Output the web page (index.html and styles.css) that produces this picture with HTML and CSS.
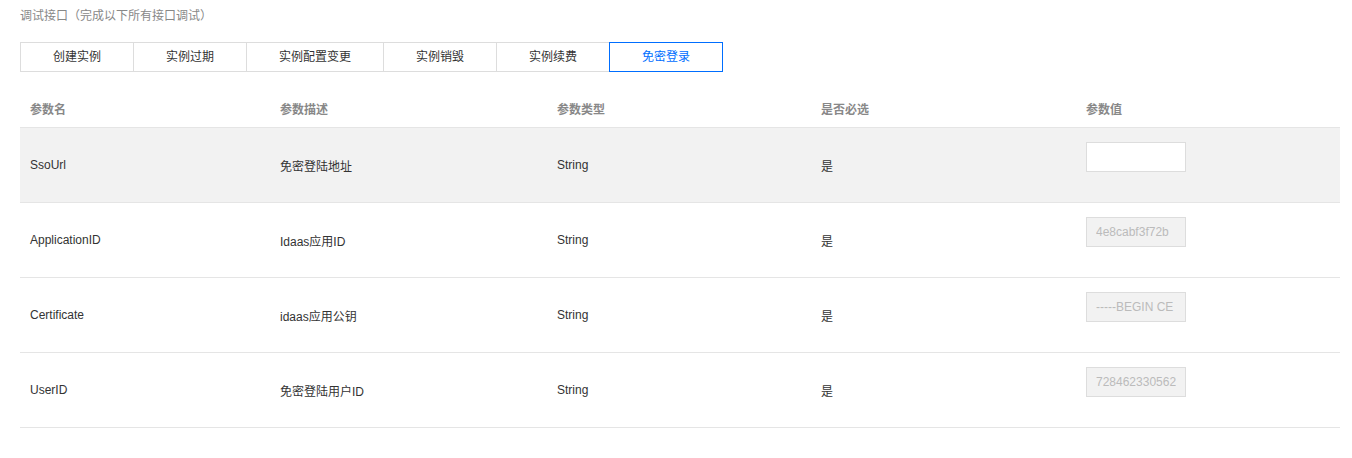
FILE: index.html
```html
<!DOCTYPE html>
<html lang="zh-CN">
<head>
<meta charset="utf-8">
<title>调试接口</title>
<link rel="stylesheet" href="styles.css">
</head>
<body>
<div class="page">
  <div class="title">调试接口（完成以下所有接口调试）</div>
  <div class="tabs">
    <div class="tab">创建实例</div>
    <div class="tab">实例过期</div>
    <div class="tab">实例配置变更</div>
    <div class="tab">实例销毁</div>
    <div class="tab">实例续费</div>
    <div class="tab active">免密登录</div>
  </div>
  <div class="table">
    <div class="row head">
      <div class="cell">参数名</div>
      <div class="cell">参数描述</div>
      <div class="cell">参数类型</div>
      <div class="cell">是否必选</div>
      <div class="cell">参数值</div>
    </div>
    <div class="row hover">
      <div class="cell">SsoUrl</div>
      <div class="cell">免密登陆地址</div>
      <div class="cell">String</div>
      <div class="cell">是</div>
      <div class="cell"><input class="input" type="text" value=""></div>
    </div>
    <div class="row">
      <div class="cell">ApplicationID</div>
      <div class="cell">Idaas应用ID</div>
      <div class="cell">String</div>
      <div class="cell">是</div>
      <div class="cell"><input class="input" type="text" value="4e8cabf3f72b" disabled></div>
    </div>
    <div class="row">
      <div class="cell">Certificate</div>
      <div class="cell">idaas应用公钥</div>
      <div class="cell">String</div>
      <div class="cell">是</div>
      <div class="cell"><input class="input" type="text" value="-----BEGIN CE" disabled></div>
    </div>
    <div class="row">
      <div class="cell">UserID</div>
      <div class="cell">免密登陆用户ID</div>
      <div class="cell">String</div>
      <div class="cell">是</div>
      <div class="cell"><input class="input" type="text" value="728462330562" disabled></div>
    </div>
  </div>
</div>
</body>
</html>
```
FILE: styles.css
```css
* { box-sizing: border-box; }
html, body { margin: 0; padding: 0; background: #fff; }
body {
  font-family: "Liberation Sans", "Noto Sans CJK SC", sans-serif;
  font-size: 12px;
  color: #333;
}
.page {
  padding: 8px 12px 0 20px;
}
.title {
  line-height: 16px;
  color: #888;
}
.tabs {
  display: flex;
  margin-top: 18px;
  padding-left: 1px;
}
.tab {
  height: 30px;
  line-height: 28px;
  padding: 0 32px;
  border: 1px solid #ddd;
  margin-left: -1px;
  color: #333;
  white-space: nowrap;
  position: relative;
}
.tab.active {
  border-color: #006eff;
  color: #006eff;
  z-index: 1;
}
.table {
  margin-top: 18px;
  width: 1320px;
}
.row {
  display: grid;
  grid-template-columns: 250px 277px 264px 265px 264px;
  align-items: center;
  height: 75px;
  border-bottom: 1px solid #e5e5e5;
}
.row.head {
  height: 38px;
  font-weight: bold;
  color: #888;
}
.row.hover {
  background: #f2f2f2;
}
.cell {
  padding-left: 10px;
  white-space: nowrap;
}
.input {
  display: block;
  width: 100px;
  height: 30px;
  border: 1px solid #ddd;
  background: #fff;
  padding: 0 9px;
  margin: 0 0 16px 0;
  font-family: "Liberation Sans", "Noto Sans CJK SC", sans-serif;
  font-size: 12px;
  color: #bbb;
  outline: none;
}
.input:disabled {
  background: #f2f2f2;
  color: #bbb;
}
```
